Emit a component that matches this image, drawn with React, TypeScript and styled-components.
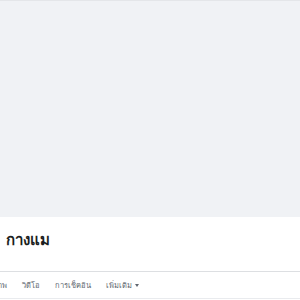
import { createGlobalStyle, styled } from "styled-components";

const Global = createGlobalStyle`
    body {
        margin: 0;
        background: #fff;
        font-family: "Noto Sans", "DejaVu Sans", sans-serif;
        overflow: hidden;
    }
`;

const Page = styled.div`
    width: 300px;
    height: 300px;
    overflow: hidden;
`;
const Cover = styled.div`
    height: 216px;
    background-color: #f0f2f5;
    border-top: 1px solid #e4e6e9;
`;
const Header = styled.div`
    display: flex;
    flex-direction: column;
`;
const Name = styled.h1`
    margin: 0 0 0 -50px;
    padding-top: 12px;
    font-size: 15px;
    font-weight: 700;
    line-height: 20px;
    word-spacing: 6px;
    color: #1c1e21;
    white-space: nowrap;
`;
const Nick = styled.div`
    margin-left: -20px;
    font-size: 7px;
    line-height: 8px;
    color: #606770;
    white-space: nowrap;
`;
const Tabs = styled.nav`
    display: flex;
    align-items: center;
    height: 26px;
    margin: 14px 0 0 -24px;
    width: 340px;
    border-top: 1px solid #dddfe2;
    border-bottom: 1px solid #e9ebee;
`;
const Tab = styled.div`
    display: flex;
    align-items: center;
    gap: 3px;
    padding: 0 7.5px;
    font-size: 7.5px;
    font-weight: 500;
    color: #606770;
    white-space: nowrap;
`;
const Caret = styled.span`
    width: 0;
    height: 0;
    border-left: 2.5px solid transparent;
    border-right: 2.5px solid transparent;
    border-top: 3px solid #606770;
`;

const tabs = ["รูปภาพ", "วิดีโอ", "การเช็คอิน"];

export default function App() {
    return (
        <Page>
            <Global />
            <Cover />
            <Header>
                <Name>สมชาย กางแม</Name>
                <Nick>ชื่อเล่น</Nick>
                <Tabs>
                    {tabs.map((t) => (
                        <Tab key={t}>{t}</Tab>
                    ))}
                    <Tab>
                        เพิ่มเติม <Caret />
                    </Tab>
                </Tabs>
            </Header>
        </Page>
    );
}
